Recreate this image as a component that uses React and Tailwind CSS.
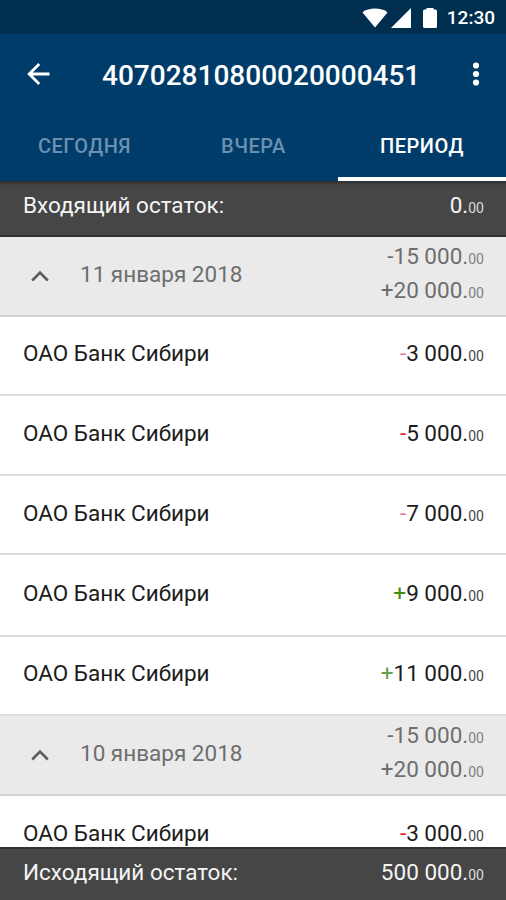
import { useState } from "react"

const tabs = ["СЕГОДНЯ", "ВЧЕРА", "ПЕРИОД"]

const groups = [
  {
    date: "11 января 2018",
    out: "15 000",
    income: "20 000",
    rows: [
      { name: "ОАО Банк Сибири", sign: "-", sum: "3 000", color: "text-[#ee7f92]", box: "h-[79px] pb-[5px]" },
      { name: "ОАО Банк Сибири", sign: "-", sum: "5 000", color: "text-[#d8202c]", box: "h-[80px] pb-[5px]" },
      { name: "ОАО Банк Сибири", sign: "-", sum: "7 000", color: "text-[#e87488]", box: "h-[79px] pb-[3px]" },
      { name: "ОАО Банк Сибири", sign: "+", sum: "9 000", color: "text-[#3f8a0c]", box: "h-[82px] pb-[5px]" },
      { name: "ОАО Банк Сибири", sign: "+", sum: "11 000", color: "text-[#6a9d4a]", box: "h-[79px] pb-[5px]" },
    ],
  },
  {
    date: "10 января 2018",
    out: "15 000",
    income: "20 000",
    rows: [{ name: "ОАО Банк Сибири", sign: "-", sum: "3 000", color: "text-[#e01522]", box: "h-[79px] pb-[3px]" }],
  },
]

function Amount({ sign, sum, color }) {
  return (
    <span className="flex items-baseline whitespace-nowrap">
      {sign && <span className={color}>{sign}</span>}
      <span>{sum}.</span>
      <span className="text-[14px] leading-none opacity-85">00</span>
    </span>
  )
}

function StatusBar() {
  return (
    <div className="h-[34px] shrink-0 bg-[#002e4f] text-white flex items-center justify-end pr-[11px]">
      <svg className="mt-px" width="26" height="20" viewBox="0 0 26 20" fill="currentColor">
        <path d="M0.5 4.4C3.5 1.8 8 0.6 13 0.6s9.500 1.200 12.500 3.800L13 19.600z" />
      </svg>
      <svg className="ml-[3px] mt-px" width="20" height="20" viewBox="0 0 20 20" fill="currentColor">
        <path d="M0 20L20 0v20z" />
      </svg>
      <svg className="ml-[12px] mt-px" width="14" height="20" viewBox="0 0 14 20" fill="currentColor">
        <path d="M3.500 0h7v1.500h2q1.500 0 1.500 1.500v15.500q0 1.500-1.500 1.500h-11Q0 20 0 18.500v-15.500Q0 1.500 1.500 1.500h2z" />
      </svg>
      <span className="ml-[10px] mt-[2px] text-[19px] font-medium">12:30</span>
    </div>
  )
}

export default function App() {
  const [active, setActive] = useState(2)

  return (
    <div className="w-[506px] h-[900px] flex flex-col overflow-hidden bg-white font-['Roboto',sans-serif] text-[22.500px] leading-[34px] text-[#1c1c1c]">
      <StatusBar />

      {/* App bar */}
      <header className="h-[147px] shrink-0 bg-[#003c69] text-white flex flex-col">
        <div className="h-[80px] flex items-center">
          <button className="ml-[27px]">
            <svg width="23" height="22" viewBox="0 0 23 22" fill="none" stroke="currentColor" strokeWidth="2.800">
              <path d="M22.500 11H2.500M12.200 1L2.200 11l10 10" />
            </svg>
          </button>
          <h1 className="ml-[52px] mt-[3px] text-[28px] font-medium">40702810800020000451</h1>
          <button className="ml-auto mr-[26px]">
            <svg width="8" height="24" viewBox="0 0 8 24" fill="currentColor">
              <circle cx="4" cy="3.500" r="3.100" />
              <circle cx="4" cy="12" r="3.100" />
              <circle cx="4" cy="20.500" r="3.100" />
            </svg>
          </button>
        </div>
        <nav className="flex-1 grid grid-cols-[169px_169px_168px]">
          {tabs.map((tab, i) => (
            <button
              key={tab}
              onClick={() => setActive(i)}
              className={`text-[20px] font-medium tracking-[0.500px] border-b-4 ${
                i === active ? "text-white border-white" : "text-[#6b90b0] border-transparent"
              }`}
            >
              {tab}
            </button>
          ))}
        </nav>
      </header>

      {/* Opening balance */}
      <div className="h-[56px] shrink-0 bg-[#464646] text-[#f4f4f4] border-b-2 border-[#323232] flex items-center justify-between pl-[23px] pr-[22px] pb-[6px] shadow-[inset_0_5px_3px_-3px_rgba(0,0,0,0.350)]">
        <span>Входящий остаток:</span>
        <Amount sum="0" />
      </div>

      <main className="flex-1 min-h-0 overflow-hidden">
        {groups.map((group) => (
          <section key={group.date}>
            <div className="h-[80px] bg-[#eaeaea] text-[#6e6e6e] border-b-2 border-[#d2d2d2] flex items-center pl-[31px] pr-[22px]">
              <svg width="18" height="12" viewBox="0 0 18 12" fill="none" stroke="#5c5c5c" strokeWidth="2.600">
                <path d="M1.200 10.500L9 2.600l7.800 7.900" />
              </svg>
              <span className="ml-[31px] pb-[4px]">{group.date}</span>
              <div className="ml-auto pb-[6px] flex flex-col items-end">
                <Amount sign="-" sum={group.out} />
                <Amount sign="+" sum={group.income} />
              </div>
            </div>
            {group.rows.map((row, i) => (
              <div
                key={i}
                className={`${row.box} border-b-2 border-[#dcdcdc] flex items-center justify-between pl-[23px] pr-[22px]`}
              >
                <span>{row.name}</span>
                <Amount sign={row.sign} sum={row.sum} color={row.color} />
              </div>
            ))}
          </section>
        ))}
      </main>

      {/* Closing balance */}
      <div className="h-[53px] shrink-0 bg-[#464646] text-[#f4f4f4] border-t-2 border-[#323232] flex items-center justify-between pl-[23px] pr-[22px] pb-[6px]">
        <span>Исходящий остаток:</span>
        <Amount sum="500 000" />
      </div>
    </div>
  )
}
